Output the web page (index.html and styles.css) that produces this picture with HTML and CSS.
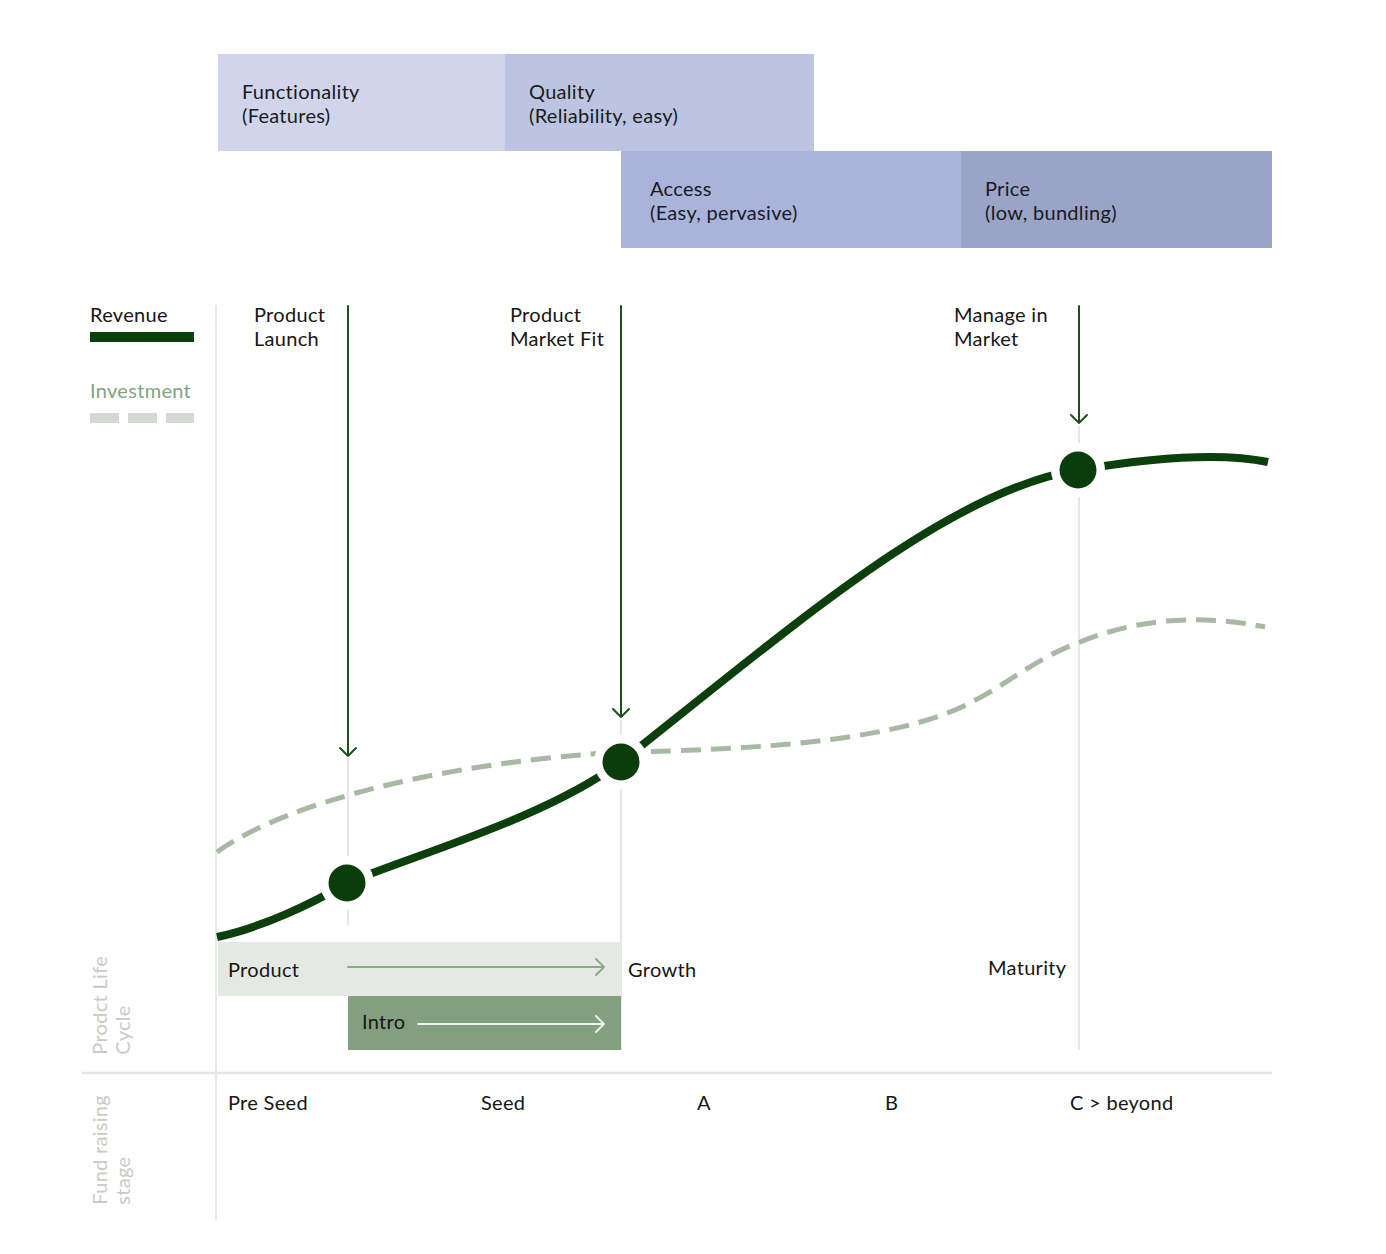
FILE: index.html
```html
<!DOCTYPE html>
<html lang="en">
<head>
<meta charset="utf-8">
<title>Product life cycle</title>
<link rel="stylesheet" href="styles.css">
</head>
<body>
<div class="page">
  <div class="bands">
    <div class="band band-func">Functionality<br>(Features)</div>
    <div class="band band-quality">Quality<br>(Reliability, easy)</div>
    <div class="band band-access">Access<br>(Easy, pervasive)</div>
    <div class="band band-price">Price<br>(low, bundling)</div>
  </div>

  <div class="chart">
    <svg class="chart-svg" viewBox="0 248 1386 1006" width="1386" height="1006" xmlns="http://www.w3.org/2000/svg">
      <!-- grid lines -->
      <line x1="216" y1="305" x2="216" y2="1220" stroke="#e8e8e8" stroke-width="2"/>
      <line x1="82" y1="1073" x2="1272" y2="1073" stroke="#e6e6e6" stroke-width="2.5"/>
      <line x1="348" y1="758" x2="348" y2="925" stroke="#e6e6e6" stroke-width="2"/>
      <line x1="621" y1="720" x2="621" y2="1050" stroke="#e6e6e6" stroke-width="2"/>
      <line x1="1079" y1="426" x2="1079" y2="1050" stroke="#e6e6e6" stroke-width="2"/>

      <!-- legend -->
      <rect x="90" y="332" width="104" height="10" fill="#0b3f0b"/>
      <rect x="90" y="413" width="29" height="10" fill="#d3d9d2"/>
      <rect x="128" y="413" width="29" height="10" fill="#d3d9d2"/>
      <rect x="166" y="413" width="28" height="10" fill="#d3d9d2"/>

      <!-- product life cycle blocks -->
      <rect x="218" y="942" width="403" height="54" fill="#e5e9e4"/>
      <rect x="348" y="996" width="273" height="54" fill="#82a07f"/>
      <g fill="none" stroke-width="2" stroke-linecap="round" stroke-linejoin="round">
        <path d="M348 967 H604 M596 959 L604 967 L596 975" stroke="#8ea98a"/>
        <path d="M418 1024 H604 M596 1016 L604 1024 L596 1032" stroke="#eef2ec"/>
      </g>

      <!-- investment curve -->
      <path d="M217 852 C290 800 450 762 621 752 C760 750 880 740 950 712 C1000 692 1030 660 1080 642 C1130 622 1190 612 1265 627"
            fill="none" stroke="#a7b9a2" stroke-width="5" stroke-dasharray="20 10"/>

      <!-- revenue curve -->
      <path d="M217 937 C260 928 310 905 347 883 C420 853 545 818 621 762 C800 620 950 490 1078 470 C1150 458 1220 452 1268 462"
            fill="none" stroke="#0b3f0b" stroke-width="8"/>

      <!-- milestone arrows -->
      <g fill="none" stroke="#1b4f1b" stroke-width="2" stroke-linecap="round" stroke-linejoin="round">
        <path d="M348 306 V756 M340 748 L348 756 L356 748"/>
        <path d="M621 306 V717 M613 709 L621 717 L629 709"/>
        <path d="M1079 306 V423 M1071 415 L1079 423 L1087 415"/>
      </g>

      <!-- dots -->
      <g>
        <circle cx="347" cy="883" r="27" fill="#fff"/>
        <circle cx="347" cy="883" r="18.5" fill="#0a3d0a"/>
        <circle cx="621" cy="762" r="27" fill="#fff"/>
        <circle cx="621" cy="762" r="18.5" fill="#0a3d0a"/>
        <circle cx="1078" cy="470" r="27" fill="#fff"/>
        <circle cx="1078" cy="470" r="18.5" fill="#0a3d0a"/>
      </g>
    </svg>

    <div class="lbl legend-rev" >Revenue</div>
    <div class="lbl legend-inv">Investment</div>

    <div class="lbl ms-launch">Product<br>Launch</div>
    <div class="lbl ms-fit">Product<br>Market Fit</div>
    <div class="lbl ms-manage">Manage in<br>Market</div>

    <div class="lbl plc-product">Product</div>
    <div class="lbl plc-intro">Intro</div>
    <div class="lbl plc-growth">Growth</div>
    <div class="lbl plc-maturity">Maturity</div>

    <div class="side side-plc">Prodct Life<br>Cycle</div>
    <div class="side side-fund">Fund raising<br>stage</div>

    <div class="lbl st-preseed">Pre Seed</div>
    <div class="lbl st-seed">Seed</div>
    <div class="lbl st-a">A</div>
    <div class="lbl st-b">B</div>
    <div class="lbl st-c">C &gt; beyond</div>
  </div>
</div>
</body>
</html>
```

FILE: styles.css
```css
* { box-sizing: border-box; }

html, body {
  margin: 0;
  padding: 0;
  background: #ffffff;
}

body {
  font-family: Lato, "Noto Sans", "Liberation Sans", sans-serif;
  color: #161616;
  font-size: 20px;
  line-height: 24px;
  letter-spacing: 0.3px;
}

.page {
  width: 1386px;
  height: 1254px;
  padding-top: 54px;
  overflow: hidden;
}

.bands {
  margin-left: 218px;
  width: 1054px;
  display: grid;
  grid-template-columns: 287px 116px 193px 147px 311px;
  grid-template-rows: 97px 97px;
}

.band {
  padding: 25px 0 0 24px;
  color: #1a1a22;
}

.band-func { grid-column: 1 / 2; grid-row: 1; background: #d0d5eb; }
.band-quality { grid-column: 2 / 4; grid-row: 1; background: #bdc4e1; }
.band-access { grid-column: 3 / 5; grid-row: 2; background: #aab4da; padding-left: 29px; }
.band-price { grid-column: 5 / 6; grid-row: 2; background: #9aa4c6; }

.chart {
  position: relative;
  width: 1386px;
  height: 1006px;
}

.chart-svg {
  display: block;
  position: absolute;
  left: 0;
  top: 0;
}

.lbl {
  position: absolute;
  white-space: nowrap;
}

.legend-rev { left: 90px; top: 54px; }
.legend-inv { left: 90px; top: 130px; color: #86a182; }

.ms-launch { left: 254px; top: 54px; }
.ms-fit { left: 510px; top: 54px; }
.ms-manage { left: 954px; top: 54px; }

.plc-product { left: 228px; top: 709px; }
.plc-intro { left: 362px; top: 761px; }
.plc-growth { left: 628px; top: 709px; }
.plc-maturity { left: 988px; top: 707px; }

.st-preseed { left: 228px; top: 842px; }
.st-seed { left: 481px; top: 842px; }
.st-a { left: 697px; top: 842px; }
.st-b { left: 885px; top: 842px; }
.st-c { left: 1070px; top: 842px; }

.side {
  position: absolute;
  left: 88px;
  writing-mode: vertical-rl;
  transform: rotate(180deg);
  white-space: nowrap;
  color: #c6ccc5;
  line-height: 23px;
}

.side-plc { bottom: 199px; }
.side-fund { bottom: 49px; }
```
